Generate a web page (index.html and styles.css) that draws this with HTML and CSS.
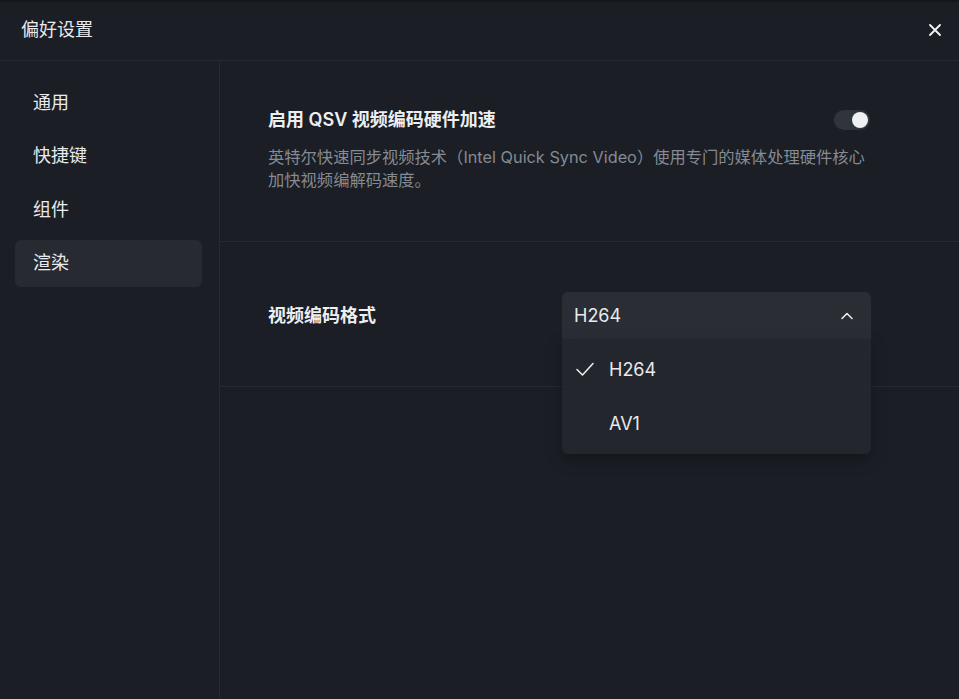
FILE: index.html
```html
<!DOCTYPE html>
<html lang="zh-CN">
<head>
<meta charset="utf-8">
<title>偏好设置</title>
<link rel="stylesheet" href="styles.css">
</head>
<body>
<div class="window">
  <header class="header">
    <h1 class="title">偏好设置</h1>
    <button class="close" aria-label="关闭">
      <svg width="12" height="12" viewBox="0 0 12 12"><path d="M1 1 L11 11 M11 1 L1 11" stroke="#f2f3f5" stroke-width="1.8" stroke-linecap="round"/></svg>
    </button>
  </header>
  <div class="main">
    <nav class="sidebar">
      <div class="nav-item">通用</div>
      <div class="nav-item">快捷键</div>
      <div class="nav-item">组件</div>
      <div class="nav-item active">渲染</div>
    </nav>
    <section class="content">
      <div class="setting setting-qsv">
        <div class="setting-head">
          <div class="setting-title">启用 QSV 视频编码硬件加速</div>
          <div class="toggle on"><span class="knob"></span></div>
        </div>
        <p class="setting-desc">英特尔快速同步视频技术（Intel Quick Sync Video）使用专门的媒体处理硬件核心加快视频编解码速度。</p>
      </div>
      <div class="setting setting-format">
        <div class="setting-title">视频编码格式</div>
        <div class="select">
          <div class="select-head">
            <span>H264</span>
            <svg class="chev" width="14" height="10" viewBox="0 0 14 10"><path d="M2 7.5 L7 2.5 L12 7.5" fill="none" stroke="#e8eaed" stroke-width="1.6" stroke-linecap="round" stroke-linejoin="round"/></svg>
          </div>
          <div class="select-menu">
            <div class="option selected">
              <svg class="check" width="20" height="16" viewBox="0 0 20 16"><path d="M2 8.5 L7.5 14 L18 2.5" fill="none" stroke="#e8eaed" stroke-width="1.6" stroke-linecap="round" stroke-linejoin="round"/></svg>
              <span>H264</span>
            </div>
            <div class="option">
              <span class="check-space"></span>
              <span>AV1</span>
            </div>
          </div>
        </div>
      </div>
    </section>
  </div>
</div>
</body>
</html>
```

FILE: styles.css
```css
* { box-sizing: border-box; }
html, body { margin: 0; padding: 0; height: 100%; }
body {
  background: #1b1e25;
  color: #e8eaed;
  font-family: Inter, "Noto Sans CJK SC", sans-serif;
  overflow: hidden;
}
.window {
  height: 699px;
  display: flex;
  flex-direction: column;
  border-top: 2px solid #15171c;
}
.header {
  height: 59px;
  flex: none;
  display: flex;
  align-items: center;
  justify-content: space-between;
  padding: 0 16px 2px 21px;
  border-bottom: 1px solid #262a31;
}
.title {
  margin: 0;
  font-size: 18px;
  font-weight: 400;
  color: #e8eaed;
  line-height: 24px;
}
.close {
  background: none;
  border: 0;
  padding: 2px;
  display: flex;
  cursor: pointer;
}
.main {
  flex: 1;
  display: flex;
  min-height: 0;
}
.sidebar {
  width: 220px;
  flex: none;
  border-right: 1px solid #262a31;
  padding: 18px 17px 0 15px;
  display: flex;
  flex-direction: column;
  gap: 6.5px;
}
.nav-item {
  height: 47px;
  display: flex;
  align-items: center;
  padding-left: 18px;
  padding-bottom: 4px;
  font-size: 18px;
  color: #e8eaed;
  border-radius: 6px;
}
.nav-item.active { background: #272a31; }
.content {
  flex: 1;
  display: flex;
  flex-direction: column;
}
.setting {
  border-bottom: 1px solid #262a31;
  padding-left: 48px;
  padding-right: 88px;
}
.setting-qsv {
  padding-top: 47px;
  padding-bottom: 49px;
}
.setting-head {
  display: flex;
  align-items: center;
  justify-content: space-between;
}
.setting-title {
  font-size: 18px;
  font-weight: 600;
  line-height: 24px;
  color: #eceef1;
}
.toggle {
  width: 36px;
  height: 20px;
  border-radius: 10px;
  background: #30343c;
  display: flex;
  align-items: center;
  justify-content: flex-end;
  padding: 2px;
  margin-right: 1px;
}
.knob {
  width: 16px;
  height: 16px;
  border-radius: 50%;
  background: #eef0f2;
}
.setting-desc {
  margin: 14px 0 0;
  font-size: 16.3px;
  line-height: 23px;
  color: #858a93;
  max-width: 603px;
}
.setting-format {
  padding-top: 50px;
  padding-bottom: 47px;
  display: flex;
  align-items: center;
  justify-content: space-between;
}
.select {
  position: relative;
  width: 309px;
}
.select-head {
  height: 47px;
  background: #2a2d34;
  border-radius: 6px 6px 0 0;
  display: flex;
  align-items: center;
  justify-content: space-between;
  padding: 0 17px 0 12px;
  font-size: 18px;
  color: #e8eaed;
}
.select-menu {
  position: absolute;
  left: 0;
  right: 0;
  top: 100%;
  background: #23262d;
  border-radius: 0 0 6px 6px;
  padding: 3px 0 4px;
  box-shadow: 0 6px 16px rgba(0,0,0,0.25);
  z-index: 2;
}
.option {
  height: 54px;
  display: flex;
  align-items: center;
  padding-left: 13px;
  font-size: 18px;
  color: #e8eaed;
}
.check, .check-space {
  width: 20px;
  flex: none;
  margin-right: 14px;
}
.check-space { height: 16px; }
```
